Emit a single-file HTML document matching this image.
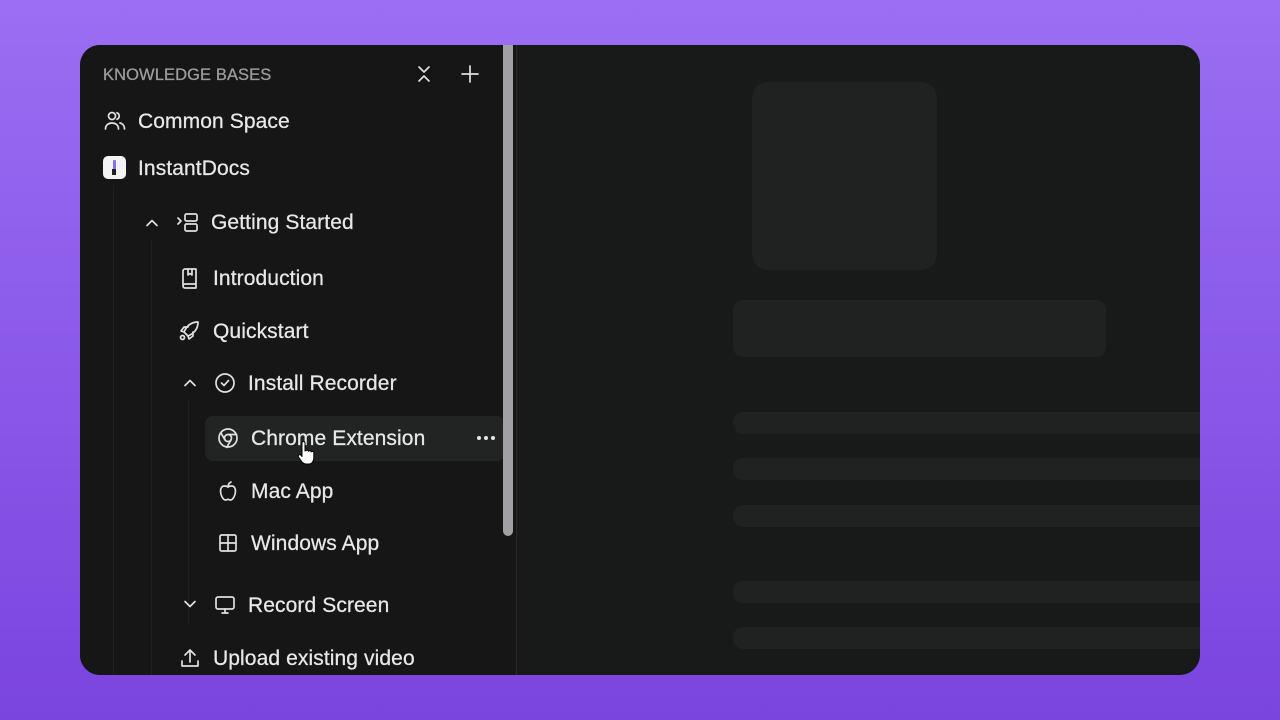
<!DOCTYPE html>
<html><head><meta charset="utf-8"><style>
*{margin:0;padding:0;box-sizing:border-box}
body{width:1280px;height:720px;overflow:hidden;background:linear-gradient(180deg,#9b6ef2 0%,#8a59ea 50%,#7a44de 100%);font-family:"Liberation Sans",sans-serif;position:relative}
.win{position:absolute;left:80px;top:45px;width:1120px;height:630px;background:#181919;border-radius:20px;overflow:hidden}
.side{position:absolute;left:0;top:0;width:436px;height:630px;background:#161616}
.t{position:absolute;color:#e8e8e8;font-size:21px;line-height:24px;white-space:nowrap;letter-spacing:0.1px;-webkit-text-stroke:0.25px #e8e8e8}
svg{position:absolute;fill:none;stroke:#e0e0e0;stroke-width:1.7;stroke-linecap:round;stroke-linejoin:round}
.g{position:absolute;width:1px;background:#202020}
.sk{position:absolute;background:#202121;border-radius:10px}
</style></head><body>
<div class="win">
<div class="side">
<div class="t" style="left:23px;top:18px;font-size:16.5px;color:#9c9c9c;-webkit-text-stroke:0.3px #9c9c9c;letter-spacing:0.1px">KNOWLEDGE BASES</div>
<svg style="left:335px;top:19px" width="18" height="20" viewBox="0 0 18 20"><path d="M4 3l5 5 5-5M4 17l5-5 5 5"/></svg>
<svg style="left:380px;top:19px" width="20" height="20" viewBox="0 0 20 20"><path d="M10 2v16M2 10h16"/></svg>
<svg style="left:24px;top:65px" width="22" height="22" viewBox="0 0 22 22"><circle cx="8" cy="6" r="3.5"/><path d="M1.5 19c0-4 3-6 6.5-6s6.5 2 6.5 6M13 2.8a3.5 3.5 0 010 6.5M16 13c2.5.5 4.5 2.5 4.5 6"/></svg>
<div class="t" style="left:58px;top:65px">Common Space</div>
<div style="position:absolute;left:23px;top:111px;width:23px;height:23px;background:#f4f4f6;border-radius:5px"><div style="position:absolute;left:10px;top:4px;width:3px;height:10px;background:#8b6cf0;border-radius:1px"></div><div style="position:absolute;left:9px;top:13px;width:4px;height:6px;background:#222"></div></div>
<div class="t" style="left:58px;top:112px">InstantDocs</div>
<div class="g" style="left:33px;top:140px;height:490px"></div>
<div class="g" style="left:71px;top:195px;height:435px"></div>
<div class="g" style="left:108px;top:355px;height:225px"></div>
<svg style="left:64px;top:170px" width="16" height="16" viewBox="0 0 16 16"><path d="M3 10.5l5-5 5 5"/></svg>
<svg style="left:96px;top:166px" width="24" height="24" viewBox="0 0 24 24"><path d="M2 7l3 3-3 3"/><rect x="9" y="3" width="12" height="7" rx="1.5"/><rect x="9" y="13" width="12" height="7" rx="1.5"/></svg>
<div class="t" style="left:131px;top:166px">Getting Started</div>
<svg style="left:99px;top:222px" width="22" height="22" viewBox="0 0 22 22"><path d="M4 18V4a2 2 0 012-2h11v15H6a2 2 0 00-2 2 2 2 0 002 2h11v-4"/><path d="M9 2v6l2-1.5L13 8V2"/></svg>
<div class="t" style="left:133px;top:222px">Introduction</div>
<svg style="left:98px;top:275px" width="22" height="22" viewBox="0 0 22 22"><path d="M8 14l-2-2C9 5 14 2 20 2c0 6-3 11-10 14z"/><path d="M6 12l-3-1 3-4h4M10 16l1 3 4-3v-4"/><circle cx="4.5" cy="17.5" r="2"/></svg>
<div class="t" style="left:133px;top:275px">Quickstart</div>
<svg style="left:102px;top:330px" width="16" height="16" viewBox="0 0 16 16"><path d="M3 10.5l5-5 5 5"/></svg>
<svg style="left:134px;top:327px" width="22" height="22" viewBox="0 0 22 22"><circle cx="11" cy="11" r="9"/><path d="M7.5 11l2.5 2.5 4.5-5"/></svg>
<div class="t" style="left:168px;top:327px">Install Recorder</div>
<div style="position:absolute;left:125px;top:371px;width:300px;height:45px;background:#222323;border-radius:8px"></div>
<svg style="left:137px;top:382px" width="22" height="22" viewBox="0 0 22 22"><circle cx="11" cy="11" r="9"/><circle cx="11" cy="11" r="3.5"/><path d="M11 7.5h8.5M8 13l-4.3-7.4M14 13l-4.3 7.4"/></svg>
<div class="t" style="left:171px;top:382px">Chrome Extension</div>
<div style="position:absolute;left:397px;top:391px;display:flex;gap:3px"><i style="width:4px;height:4px;border-radius:2px;background:#e6e6e6"></i><i style="width:4px;height:4px;border-radius:2px;background:#e6e6e6"></i><i style="width:4px;height:4px;border-radius:2px;background:#e6e6e6"></i></div>
<svg style="left:216px;top:395px;fill:#fff;stroke:#000;stroke-width:1" width="20" height="26" viewBox="0 0 20 26"><path d="M6 3a1.5 1.5 0 013 0v8l1-.3a1.5 1.5 0 012.6.6 1.5 1.5 0 012.6.6 1.5 1.5 0 012.6.8V18c0 3-2 6-5 6H10c-2 0-3-1-4-2L2.5 17a1.5 1.5 0 012.2-2L6 16.5z"/></svg>
<svg style="left:137px;top:435px" width="22" height="22" viewBox="0 0 22 22"><path d="M11 7c-1-.8-2.5-1-3.5-1C5 6 3.5 8 3.5 11c0 4 2.5 9 5 9 1 0 1.5-.6 2.5-.6s1.5.6 2.5.6c2.5 0 5-5 5-9 0-3-1.5-5-4-5-1 0-2.5.2-3.5 1z"/><path d="M11 7c0-2 1-4 3-5"/></svg>
<div class="t" style="left:171px;top:435px">Mac App</div>
<svg style="left:138px;top:488px" width="20" height="20" viewBox="0 0 20 20"><rect x="2" y="2" width="16" height="16" rx="1.5"/><path d="M10 2v16M2 10h16"/></svg>
<div class="t" style="left:171px;top:487px">Windows App</div>
<svg style="left:102px;top:551px" width="16" height="16" viewBox="0 0 16 16"><path d="M3 5.5l5 5 5-5"/></svg>
<svg style="left:134px;top:549px" width="22" height="22" viewBox="0 0 22 22"><rect x="2" y="3" width="18" height="12" rx="2"/><path d="M8 19h6M11 15v4"/></svg>
<div class="t" style="left:168px;top:549px">Record Screen</div>
<svg style="left:99px;top:602px" width="22" height="22" viewBox="0 0 22 22"><path d="M3 14v5h16v-5M11 15V3M6 8l5-5 5 5"/></svg>
<div class="t" style="left:133px;top:602px">Upload existing video</div>
</div>
<div style="position:absolute;left:423px;top:0;width:10px;height:491px;background:#a1a1a5;border-radius:0 0 5px 5px"></div>
<div style="position:absolute;left:436px;top:0;width:1px;height:630px;background:#2a2a2a"></div>
<div class="sk" style="left:672px;top:37px;width:185px;height:188px;border-radius:16px"></div>
<div class="sk" style="left:653px;top:255px;width:373px;height:57px"></div>
<div class="sk" style="left:653px;top:367px;width:480px;height:22px"></div>
<div class="sk" style="left:653px;top:413px;width:480px;height:22px"></div>
<div class="sk" style="left:653px;top:460px;width:480px;height:22px"></div>
<div class="sk" style="left:653px;top:536px;width:480px;height:22px"></div>
<div class="sk" style="left:653px;top:582px;width:480px;height:22px"></div>
</div>
</body></html>
